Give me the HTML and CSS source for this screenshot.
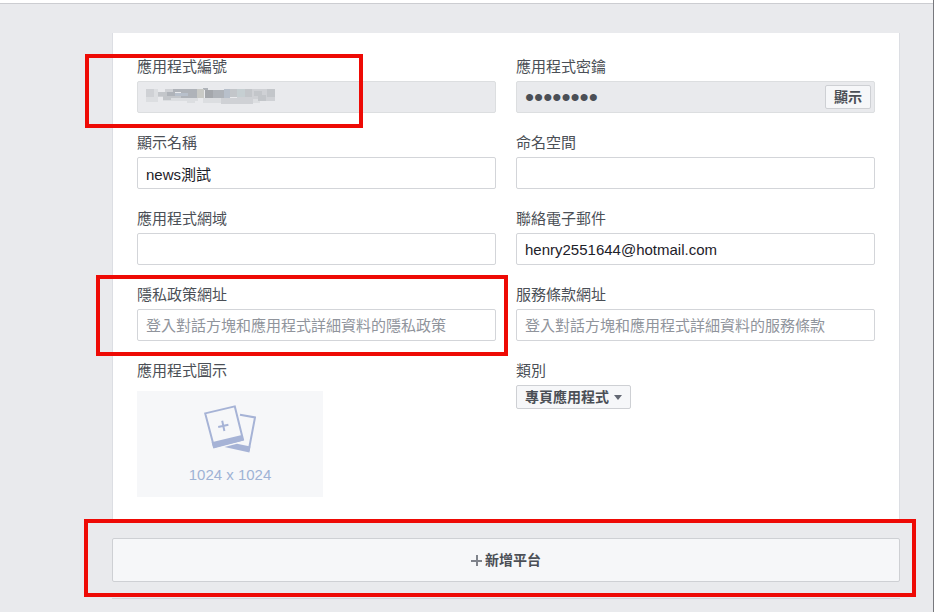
FILE: index.html
```html
<!DOCTYPE html>
<html lang="zh-Hant">
<head>
<meta charset="utf-8">
<meta name="viewport" content="width=device-width, initial-scale=1">
<title>應用程式設定</title>
<link rel="stylesheet" href="styles.css">
</head>
<body>
<header class="topbar"></header>
<main class="content">
  <form class="card">
    <div class="field marked">
      <label for="app-id">應用程式編號</label>
      <div class="locked">
        <svg class="mosaic" width="130" height="18" viewBox="0 0 130 18" shape-rendering="crispEdges" aria-hidden="true">
          <path fill="#dcdee1" d="M0 10h12v5H0zM8 2h4v8H8zM17 10h35v4H17zM41 12h8v4h-8zM57 11h20v5H57zM107 12h7v4h-7z"/>
          <path fill="#cfd1d5" d="M0 2h8v8H0zM12 5h7v5h-7zM19 2h8v5h-8zM75 11h32v6H75zM91 2h30v10H91zM113 10h16v4h-16z"/>
          <path fill="#c3c6ca" d="M12 5h9v4h-9zM17 10h8v3h-8zM17 9h20v2H17zM84 2h7v8h-7zM99 2h7v8h-7zM108 4h8v5h-8zM112 8h8v6h-8zM121 2h8v8h-8z"/>
          <path fill="#afb3b9" d="M27 2h24v3H27zM21 5h8v4h-8zM35 4h16v7H35zM57 1h5v2h-5zM59 3h19v8H59z"/>
          <path fill="#b8c0cb" d="M29 6h13v3H29zM78 2h6v9h-6z"/>
          <path fill="#a4a7ac" d="M59 3h8v8h-8z"/>
          <path fill="#c9cac6" d="M51 2h7v9h-7z"/>
          <path fill="#c6cfd2" d="M91 2h8v8h-8z"/>
        </svg>
        <input id="app-id" type="text" readonly>
      </div>
      <span class="mark mark-id"></span>
    </div>
    <div class="field">
      <label for="secret">應用程式密鑰</label>
      <div class="locked">
        <input class="secret" id="secret" type="password" value="12345678" readonly>
        <button class="reveal" type="button">顯示</button>
      </div>
    </div>
    <div class="field">
      <label for="display-name">顯示名稱</label>
      <input class="text" id="display-name" type="text" value="news測試">
    </div>
    <div class="field">
      <label for="namespace">命名空間</label>
      <input class="text" id="namespace" type="text">
    </div>
    <div class="field">
      <label for="domain">應用程式網域</label>
      <input class="text" id="domain" type="text">
    </div>
    <div class="field">
      <label for="email">聯絡電子郵件</label>
      <input class="text" id="email" type="text" value="henry2551644@hotmail.com">
    </div>
    <div class="field marked">
      <label for="privacy">隱私政策網址</label>
      <input class="text" id="privacy" type="text" placeholder="登入對話方塊和應用程式詳細資料的隱私政策">
      <span class="mark mark-privacy"></span>
    </div>
    <div class="field">
      <label for="terms">服務條款網址</label>
      <input class="text" id="terms" type="text" placeholder="登入對話方塊和應用程式詳細資料的服務條款">
    </div>
    <div class="field">
      <label for="icon-upload">應用程式圖示</label>
      <button class="upload" id="icon-upload" type="button">
        <svg width="52" height="48" viewBox="0 0 52 48" aria-hidden="true">
          <path fill="none" stroke="#a6b3d6" stroke-width="2" d="M36 9.7 51 12.4 44.6 46"/>
          <path fill="#a6b3d6" d="M20.5 42 33 38.8 46.4 41.4 45.4 47.6z"/>
          <path fill="#f6f7f9" stroke="#a6b3d6" stroke-width="2" d="M1.2 8.4 30.8 1.4 39 34.6 10 41.8z"/>
          <path fill="#a6b3d6" d="M7.6 37.2 37.8 30 39.8 35.6 9.4 43.4z"/>
          <path fill="none" stroke="#a6b3d6" stroke-width="2" d="M14.2 22 24.4 19.8M18.2 15.8 20.4 26"/>
        </svg>
        <span>1024 x 1024</span>
      </button>
    </div>
    <div class="field">
      <label for="category">類別</label>
      <div class="picker">
        <select id="category"><option>專頁應用程式</option></select>
      </div>
    </div>
  </form>
  <div class="platform marked">
    <button class="add" type="button">
      <svg width="11" height="11" viewBox="0 0 11 11" aria-hidden="true"><path fill="#7f838b" d="M5 0h2v5h4v2H7v4H5V7H0V5h5z"/></svg>
      <span>新增平台</span>
    </button>
    <span class="mark mark-platform"></span>
  </div>
</main>
</body>
</html>
```
FILE: styles.css
```css
* {
  box-sizing: border-box;
}

body {
  margin: 0;
  min-height: 100vh;
  background: #e9eaed;
  border-right: 1px solid #77787d;
  color: #4b4f56;
  font-family: "Liberation Sans", "Noto Sans CJK TC", sans-serif;
  font-size: 15px;
  line-height: 20px;
}

button,
input,
select {
  margin: 0;
  font: inherit;
}

.topbar {
  height: 4px;
  background: #fff;
  border-bottom: 1px solid #cccdd1;
}

.content {
  margin: 29px 33px 0 112px;
  border-bottom: 1px solid #d3d4d7;
  padding-bottom: 16px;
}

.card {
  display: grid;
  grid-template-columns: 1fr 1fr;
  gap: 20px;
  padding: 24px;
  background: #fff;
  border: solid #dcdee3;
  border-width: 0 1px;
}

.field {
  display: flex;
  flex-direction: column;
  align-items: flex-start;
  gap: 4px;
  min-width: 0;
}

.marked {
  position: relative;
}

.text,
.locked {
  width: 100%;
  height: 32px;
  border: 1px solid #d3d5d9;
  border-radius: 2px;
}

.text {
  padding: 0 8px;
  background: #fff;
  color: #1d2129;
}

.text::placeholder {
  color: #90949c;
  opacity: 1;
}

.locked {
  display: flex;
  align-items: center;
  padding: 0 3px 0 8px;
  background: #e9eaed;
  border-color: #dcdee0;
}

.locked input {
  flex: 1;
  min-width: 0;
  padding: 0;
  border: 0;
  background: none;
  color: #4b4f56;
}

.locked .secret {
  height: 30px;
  font-size: 26px;
  line-height: 30px;
}

.mosaic {
  flex: none;
  margin-bottom: 2px;
}

.reveal {
  width: 46px;
  height: 24px;
  padding: 0;
  background: #f6f7f9;
  border: 1px solid #ced0d4;
  border-radius: 2px;
  color: #4b4f56;
  font-size: 14px;
  font-weight: bold;
  line-height: 20px;
}

.upload {
  display: flex;
  flex-direction: column;
  align-items: center;
  gap: 12px;
  width: 186px;
  height: 106px;
  margin-top: 6px;
  padding: 14px 0 0;
  background: #f6f7f9;
  border: 0;
  color: #9fb3d5;
}

.picker {
  position: relative;
}

.picker select {
  display: block;
  height: 24px;
  padding: 0 21px 0 8px;
  appearance: none;
  background: #f6f7f9;
  border: 1px solid #ced0d4;
  border-radius: 2px;
  color: #4b4f56;
  font-size: 14px;
  font-weight: bold;
}

.picker::after {
  content: "";
  position: absolute;
  top: 10px;
  right: 9px;
  border: solid transparent;
  border-width: 5px 4px 0;
  border-top-color: #636873;
  pointer-events: none;
}

.platform {
  margin-top: 17px;
}

.add {
  display: flex;
  align-items: center;
  justify-content: center;
  gap: 3px;
  width: 100%;
  height: 44px;
  background: #f6f7f9;
  border: 1px solid #ced0d4;
  border-radius: 2px;
  color: #4b4f56;
  font-size: 14px;
  font-weight: bold;
}

.mark {
  position: absolute;
  border: 4px solid #ee0a05;
  pointer-events: none;
}

.mark-id {
  inset: -3px 133px -15px -52px;
}

.mark-privacy {
  inset: -10px -12px -15px -41px;
}

.mark-platform {
  inset: -19px -16px -15px -28px;
}
```
